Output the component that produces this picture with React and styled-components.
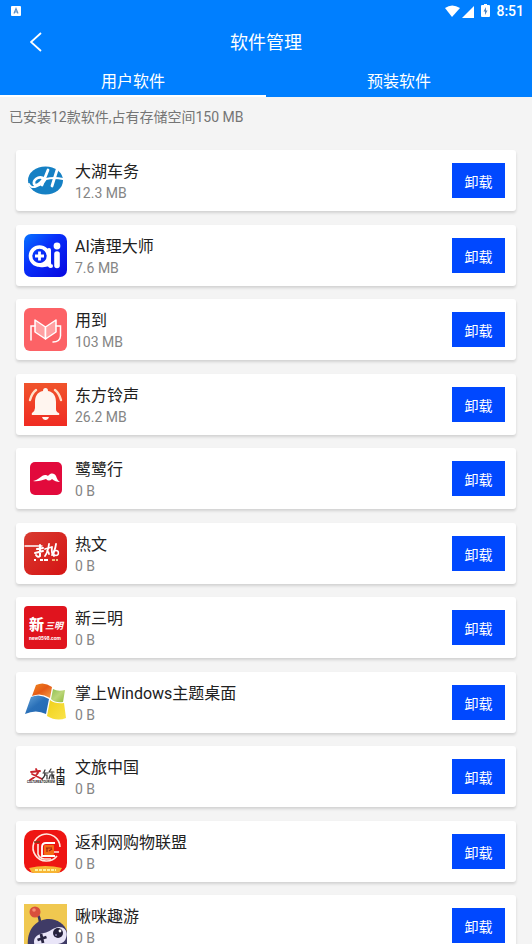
import { useState } from 'react';
import styled, { createGlobalStyle } from 'styled-components';

const GlobalStyle = createGlobalStyle`
  * {
    box-sizing: border-box;
  }

  body {
    margin: 0;
    background-color: #f4f4f4;
    font-family: Roboto, 'Noto Sans CJK SC', sans-serif;
  }

  button {
    padding: 0;
    border: none;
    font-family: inherit;
    color: #fff;
    cursor: pointer;
  }
`;

const Page = styled.div`
  display: flex;
  flex-direction: column;
  height: 100vh;
`;

const Header = styled.header`
  flex-shrink: 0;
  color: #fff;
  background-color: #007fff;
`;

const StatusBar = styled.div`
  display: flex;
  align-items: center;
  justify-content: space-between;
  height: 22px;
  padding: 0 8px 0 11px;
`;

const StatusIcons = styled.div`
  display: flex;
  align-items: center;
  font-size: 14px;
  font-weight: 500;
  line-height: 22px;

  svg {
    margin-right: 6px;
  }
`;

const TitleBar = styled.div`
  display: grid;
  grid-template-columns: 72px 1fr 72px;
  align-items: start;
  height: 42px;
`;

const BackButton = styled.button`
  display: flex;
  align-items: center;
  justify-content: center;
  height: 40px;
  background: none;
`;

const Title = styled.h1`
  margin: 0;
  font-size: 18px;
  font-weight: 400;
  line-height: 42px;
  text-align: center;
`;

const Tabs = styled.div`
  display: flex;
`;

const Tab = styled.button`
  flex: 1;
  height: 33px;
  padding-top: 4px;
  border-bottom: 2px solid ${(props) => (props.$active ? '#fff' : 'transparent')};
  font-size: 16px;
  line-height: 24px;
  background: none;
`;

const Summary = styled.p`
  flex-shrink: 0;
  margin: 0;
  padding: 8px 9px;
  color: #757575;
  font-size: 14px;
  line-height: 24px;
`;

const AppList = styled.ul`
  flex: 1;
  min-height: 0;
  margin: 0;
  padding: 13px 16px;
  overflow-y: auto;
  list-style: none;
  scrollbar-width: none;
`;

const AppCard = styled.li`
  display: flex;
  align-items: center;
  gap: 8px;
  height: 61px;
  margin-bottom: 14px;
  padding: 0 11px 0 8px;
  border-radius: 3px;
  background-color: #fff;
  box-shadow: 0 2px 3px rgba(0, 0, 0, 0.14);

  &:nth-child(even) {
    margin-bottom: 13px;
  }
`;

const AppIcon = styled.svg`
  flex-shrink: 0;
  width: 43px;
  height: 43px;
`;

const AppInfo = styled.div`
  flex: 1;
  min-width: 0;
  padding-top: 2px;
`;

const AppName = styled.div`
  color: #212121;
  font-size: 16px;
  line-height: 22px;
`;

const AppSize = styled.div`
  color: #858585;
  font-size: 14px;
  line-height: 20px;
`;

const UninstallButton = styled.button`
  width: 53px;
  height: 35px;
  font-size: 14px;
  background-color: #0048ff;
`;

const DahuIcon = () => (
  <>
    <ellipse cx="21.5" cy="21.5" rx="17.5" ry="14" fill="#1580c4" />
    <g fill="none" stroke="#fff" strokeLinecap="round">
      <path d="M24 11 L18 26 M33 11 L28 27" strokeWidth="2.8" />
      <path d="M19 19 C14 17 9 21 10 25 C12 28 17 24 19 20" strokeWidth="2.6" />
      <path d="M5 25 Q7 30 13 27 Q19 25 22 20 Q30 18 39 20" strokeWidth="2" />
    </g>
  </>
);

const AiIcon = () => (
  <>
    <defs>
      <linearGradient id="ai-bg" x1="0" y1="0" x2="1" y2="1">
        <stop offset="0" stopColor="#0874ff" />
        <stop offset="0.4" stopColor="#0830fa" />
        <stop offset="1" stopColor="#0808e0" />
      </linearGradient>
    </defs>
    <rect width="43" height="43" rx="7" fill="url(#ai-bg)" />
    <circle cx="15.5" cy="22" r="9" fill="none" stroke="#fff" strokeWidth="3.6" />
    <path d="M25 16 V28 Q25 32 27 32 M16 31 Q20 32 25 30" fill="none" stroke="#fff" strokeWidth="4" strokeLinecap="round" />
    <path d="M15.5 17.5 V26.5 M11 22 H20" stroke="#fff" strokeWidth="2.8" />
    <path d="M33 20 V31.5" stroke="#fff" strokeWidth="5.6" strokeLinecap="round" />
    <circle cx="33" cy="12" r="3.4" fill="#fff" />
  </>
);

const YongdaoIcon = () => (
  <>
    <rect width="43" height="43" rx="6" fill="#fc6266" />
    <g fill="#ffa0a2" stroke="#fff" strokeWidth="1.5" strokeLinejoin="round">
      <path d="M11 12 L21.5 19 V31 L11 24 Z" />
      <path d="M32 12 L21.5 19 V31 L32 24 Z" />
    </g>
    <path
      d="M11 18 H7 V32 M32 18 H36.500 V28 Q36 34 29 34"
      fill="none"
      stroke="#fff"
      strokeWidth="1.5"
      strokeLinecap="round"
    />
  </>
);

const BellIcon = () => (
  <>
    <defs>
      <linearGradient id="bell-bg" x1="0" y1="0" x2="0" y2="1">
        <stop offset="0" stopColor="#f0542c" />
        <stop offset="1" stopColor="#f02b22" />
      </linearGradient>
    </defs>
    <rect width="43" height="43" fill="url(#bell-bg)" />
    <path
      d="M21.5 5 Q24 5 24 8 C30 9 32 14 32 19 V26 Q32 29 35 30 Q36 32 34 32 H9 Q7 32 8 30 Q11 28 11 25 V19 C11 14 13 9 19 8 Q19 5 21.5 5 Z"
      fill="#fff5ef"
    />
    <path d="M18 34 H25 Q24 37 21.5 37 Q19 37 18 34 Z" fill="#fff5ef" />
    <path
      d="M12 7 Q8 10 6 17 M31 7 Q35 10 37 17"
      fill="none"
      stroke="#ffe0c8"
      strokeWidth="2.4"
      strokeLinecap="round"
    />
  </>
);

const EgretIcon = () => (
  <>
    <rect x="6" y="5" width="32" height="33" rx="5" fill="#e20a3c" />
    <path
      d="M9 24 C15 23 18 17 22 18 C24 19 24 19 25 18 C28 15 31 17 32 19 C33 22 34 24 36 25 C33 25 30 24 28 22 C26 24 24 24 22 22 C18 23 14 25 9 24 Z"
      fill="#fff"
    />
  </>
);

const RewenIcon = () => (
  <>
    <defs>
      <linearGradient id="rewen-bg" x1="0" y1="0" x2="1" y2="1">
        <stop offset="0" stopColor="#d83a30" />
        <stop offset="1" stopColor="#d51414" />
      </linearGradient>
    </defs>
    <rect width="43" height="43" rx="8" fill="url(#rewen-bg)" />
    <g fill="none" stroke="#fff" strokeLinecap="round" strokeLinejoin="round">
      <path d="M1 14 H18" strokeWidth="1.4" />
      <path d="M13 17 L19 16 M16 13 V24 Q14 26 12 23 M11 21 L19 19" strokeWidth="2" />
      <path
        d="M21 17 L28 15 M25 12 Q24 20 21 24 M23 19 Q25 20 25 22 M28 15 Q27 22 30 24 M32 12 Q31 19 28 23"
        strokeWidth="1.8"
      />
      <circle cx="32" cy="21" r="2.4" strokeWidth="1.5" />
    </g>
    <path d="M10 28 H12 M16 28 H19 M20 28 H24" stroke="#fff" strokeWidth="2" />
    <path d="M28 28 H34" stroke="#f3bd80" strokeWidth="2" strokeDasharray="3 1" />
  </>
);

const SanmingIcon = () => (
  <>
    <rect width="43" height="43" rx="4" fill="#e0141e" />
    <text x="5" y="24" fill="#fff" fontSize="15" fontWeight="900">新</text>
    <text x="21" y="23" fill="#fff" fontSize="9" fontWeight="700" fontStyle="italic">三明</text>
    <text x="5" y="34" fill="#fff" fontSize="5" fontWeight="700">new0598.com</text>
  </>
);

const WindowsIcon = () => (
  <>
    <defs>
      <linearGradient id="win-red" x1="0" y1="0" x2="1" y2="1">
        <stop offset="0" stopColor="#f08a20" />
        <stop offset="0.5" stopColor="#e55a16" />
        <stop offset="1" stopColor="#f3a04a" />
      </linearGradient>
      <linearGradient id="win-green" x1="0" y1="0" x2="1" y2="1">
        <stop offset="0" stopColor="#8cc050" />
        <stop offset="0.5" stopColor="#bcd67a" />
        <stop offset="1" stopColor="#8fbb3c" />
      </linearGradient>
      <linearGradient id="win-blue" x1="0" y1="0" x2="1" y2="1">
        <stop offset="0" stopColor="#6aa8dc" />
        <stop offset="0.5" stopColor="#2a70b8" />
        <stop offset="1" stopColor="#2469b5" />
      </linearGradient>
      <linearGradient id="win-yellow" x1="0" y1="0" x2="1" y2="1">
        <stop offset="0" stopColor="#f0d018" />
        <stop offset="1" stopColor="#fae44a" />
      </linearGradient>
    </defs>
    <path d="M12 4 Q20 0 28 6 L26 17 Q17 11 8 15 Z" fill="url(#win-red)" />
    <path d="M29 8 Q34 11 41 9 L39 21 Q31 22 27 18 Z" fill="url(#win-green)" />
    <path d="M7 16 Q16 12 25 18 L22 33 Q12 28 1 33 Z" fill="url(#win-blue)" />
    <path d="M26 19 Q31 23 40 22 L42 37 Q33 41 23 35 Z" fill="url(#win-yellow)" />
  </>
);

const WenlvIcon = () => (
  <>
    <g fill="none" strokeLinecap="round">
      <path d="M7 17 L16 16 M12 14 L13 16 M15 16 Q12 22 6 25 M8 19 Q12 21 18 24" stroke="#c8242c" strokeWidth="1.8" />
      <path
        d="M21 15 L20 17 M19 18 H24 M21 18 Q21 22 18 24 M21 20 H23 V24 M27 14 L25 17 M26 17 H30 M26 20 H30 M28 18 V24 M26 21 L25 24 M29 20 L30 24"
        stroke="#333"
        strokeWidth="1.2"
      />
    </g>
    <text x="3" y="28" fill="#222" fontSize="3" fontWeight="700">CULTURE&amp;TOURISM</text>
    <text x="32" y="20" fill="#222" fontSize="9" fontWeight="700">中</text>
    <text x="32" y="29" fill="#222" fontSize="9" fontWeight="700">国</text>
  </>
);

const FanliIcon = () => (
  <>
    <defs>
      <clipPath id="fanli-clip">
        <rect width="43" height="43" rx="10" />
      </clipPath>
    </defs>
    <g clipPath="url(#fanli-clip)">
      <rect width="43" height="43" fill="#ee1512" />
      <path d="M5 38 Q21.5 34 38 38 L35 43 H8 Z" fill="#f7b534" />
      <path d="M11 40 H32" stroke="#fff0a0" strokeWidth="2" strokeDasharray="3 1" />
      <path d="M33 26 A13.5 13.5 0 1 1 36 17 M35 22 H24" fill="none" stroke="#ffe9df" strokeWidth="1.6" />
      <rect x="20" y="15" width="10" height="10" rx="1" fill="#f46a16" />
      <path d="M31 13 H22 Q18 13 18 17 V26 H31" fill="none" stroke="#fff" strokeWidth="1.8" />
      <path d="M14 14 V24 Q15 28 20 29 H27" stroke="#ffe9df" strokeWidth="1.6" fill="none" />
      <path d="M22 18 H28 M23 18 V22 M25 21 L28 19" stroke="#a02312" strokeWidth="1.2" fill="none" />
      <path d="M10 12 H16" stroke="#7a3a1a" strokeWidth="1.4" />
    </g>
  </>
);

const JiumiIcon = () => (
  <>
    <defs>
      <clipPath id="jiumi-clip">
        <rect width="43" height="43" />
      </clipPath>
    </defs>
    <g clipPath="url(#jiumi-clip)">
      <rect width="43" height="43" fill="#f0c850" />
      <path d="M12 9 Q16 12 16 20" stroke="#3c375e" strokeWidth="2.6" fill="none" />
      <circle cx="11" cy="8" r="5.5" fill="#d84f3c" />
      <circle cx="10" cy="6" r="1.8" fill="#f58d72" />
      <path d="M4 43 C2 26 12 15 25 15 C35 15 43 22 44 32 V43 Z" fill="#3f3b66" />
      <path d="M11 43 C8 34 12 31 20 29 C26 28 28 24 35 23 C42 23 44 29 42 34 Q41 39 34 40 L24 43 Z" fill="#e9e5f8" />
      <path d="M17 30 L19 39 M13.5 36 L22.5 33" stroke="#292542" strokeWidth="2.8" />
      <circle cx="34" cy="29" r="5" fill="#25213c" />
      <circle cx="36" cy="27" r="1.4" fill="#fff" />
      <circle cx="32" cy="31" r="1" fill="#8c84b3" />
    </g>
  </>
);

const apps = [
  { name: '大湖车务', size: '12.3 MB', Icon: DahuIcon },
  { name: 'AI清理大师', size: '7.6 MB', Icon: AiIcon },
  { name: '用到', size: '103 MB', Icon: YongdaoIcon },
  { name: '东方铃声', size: '26.2 MB', Icon: BellIcon },
  { name: '鹭鹭行', size: '0 B', Icon: EgretIcon },
  { name: '热文', size: '0 B', Icon: RewenIcon },
  { name: '新三明', size: '0 B', Icon: SanmingIcon },
  { name: '掌上Windows主题桌面', size: '0 B', Icon: WindowsIcon },
  { name: '文旅中国', size: '0 B', Icon: WenlvIcon },
  { name: '返利网购物联盟', size: '0 B', Icon: FanliIcon },
  { name: '啾咪趣游', size: '0 B', Icon: JiumiIcon },
];

const tabs = ['用户软件', '预装软件'];

const App = () => {
  const [activeTab, setActiveTab] = useState(0);

  return (
    <Page>
      <GlobalStyle />
      <Header>
        <StatusBar>
          <svg width="10" height="10" viewBox="0 0 10 10">
            <rect width="10" height="10" rx="1" fill="#fff" />
            <path d="M3 7.5 L5 2.5 L7 7.5 M3.5 6 H6.5" fill="none" stroke="#5a8fc8" strokeWidth="1.2" />
          </svg>
          <StatusIcons>
            <svg width="33" height="14" viewBox="0 0 33 14" fill="#fff">
              <path d="M3 4 Q10 -1 18 4 L10 13 Z" />
              <path d="M32 2 V14 H20 Z" />
            </svg>
            <svg width="9" height="14" viewBox="0 0 9 14">
              <path d="M3 0 H6 V1 H8 Q9 1 9 2 V12 Q9 13 8 13 H1 Q0 13 0 12 V2 Q0 1 1 1 H3 Z" fill="#fff" />
              <path d="M5 3 L2.5 7.5 H4 V11 L6.5 6.5 H5 Z" fill="#4d83c4" />
            </svg>
            8:51
          </StatusIcons>
        </StatusBar>
        <TitleBar>
          <BackButton aria-label="返回">
            <svg width="12" height="20" viewBox="0 0 12 20">
              <path d="M11 1 L1 10 L11 19" fill="none" stroke="#fff" strokeWidth="1.8" />
            </svg>
          </BackButton>
          <Title>软件管理</Title>
        </TitleBar>
        <Tabs role="tablist">
          {tabs.map((tab, index) => (
            <Tab
              key={tab}
              role="tab"
              aria-selected={activeTab === index}
              $active={activeTab === index}
              onClick={() => setActiveTab(index)}
            >
              {tab}
            </Tab>
          ))}
        </Tabs>
      </Header>
      <Summary>已安装12款软件,占有存储空间150 MB</Summary>
      <AppList>
        {apps.map(({ name, size, Icon }) => (
          <AppCard key={name}>
            <AppIcon viewBox="0 0 43 43" aria-hidden="true">
              <Icon />
            </AppIcon>
            <AppInfo>
              <AppName>{name}</AppName>
              <AppSize>{size}</AppSize>
            </AppInfo>
            <UninstallButton>卸载</UninstallButton>
          </AppCard>
        ))}
      </AppList>
    </Page>
  );
};

export default App;
